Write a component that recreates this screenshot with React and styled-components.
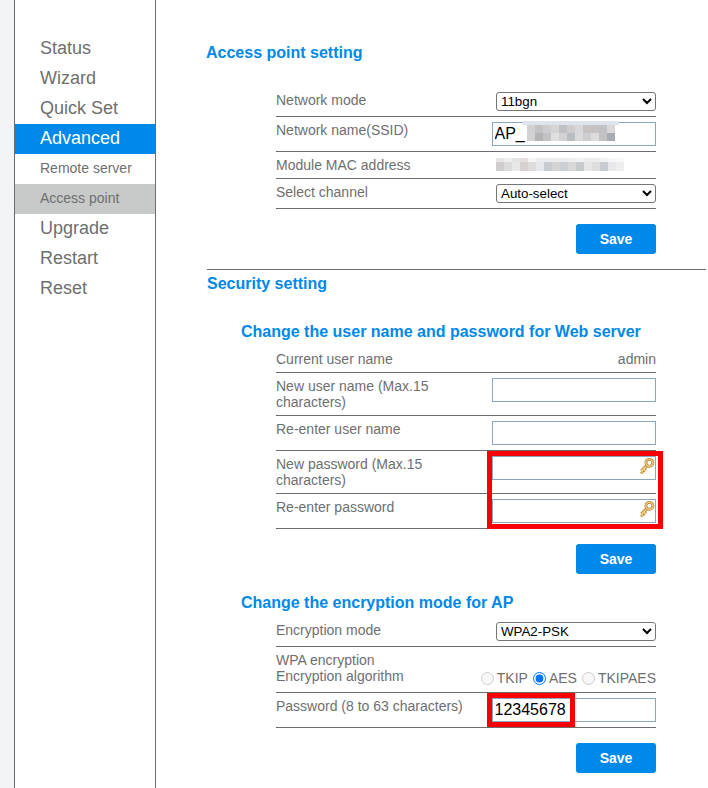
import React from 'react';
import styled, { createGlobalStyle } from 'styled-components';

const BLUE = '#0089e9';
const TEXT = '#6e6f71';
const LINE = '#6d6d6d';

const GlobalStyle = createGlobalStyle`
html, body { margin: 0; padding: 0; background: #fff; }
body { font-family: "Liberation Sans", Arial, sans-serif; font-size: 14px; color: ${TEXT}; }
`;

const NAV = [
  { label: 'Status' },
  { label: 'Wizard' },
  { label: 'Quick Set' },
  { label: 'Advanced', state: 'active' },
  { label: 'Remote server', sub: true },
  { label: 'Access point', sub: true, state: 'current' },
  { label: 'Upgrade' },
  { label: 'Restart' },
  { label: 'Reset' },
];

// pixelated blur over the redacted values
const SSID_ROWS = [
  {
    h: 4,
    x: 0,
    cells: ['#dfe4ec', '#dfe4ec', '#dfe4ec', '#dfe4ec', '#dfe4ec', '#dfe4ec', '#dfe4ec', '#dfe4ec', '#dfe4ec', '#dfe4ec', '#dfe4ec', '#dfe4ec'],
  },
  {
    h: 8,
    x: 4,
    cells: ['#d0d0d2', '#c2c2c4', '#cdcdcf', '#d6d4d5', '#bfc1c4', '#cdcdcf', '#d8d8da', '#c8c3c3', '#c8c3c3', '#bfc1c4', '#d8d8da'],
  },
  {
    h: 8,
    x: 4,
    cells: ['#d2d2d4', '#b2b3b5', '#c2c2c5', '#dfdfe1', '#d2d2d4', '#b9bcc0', '#dadadc', '#cecED0', '#dedcda', '#c2c2c4', '#a8acb2'],
  },
];
const MAC_ROWS = [
  {
    h: 4,
    x: 0,
    cells: ['#e6e6e6', '#eeeeee', '#e4e4e4', '#e4dede', '#f6f4f4', '#eaeef0', '#ecedee', '#ececec', '#ecedee', '#eeeeee', '#f2f2f2', '#eeecea', '#ecedee', '#f2f2f2', '#f6f6f6', '#f8f8f8'],
  },
  {
    h: 9,
    x: 0,
    cells: ['#cfcdcd', '#dcdcdc', '#e8e8e8', '#d6d2d2', '#dfdbdb', '#e4e8ec', '#c8ccd0', '#d4d4d4', '#ccd0d4', '#d8d8d8', '#c6caca', '#e4e6e8', '#e0dedc', '#c8ccd0', '#e8e8ea', '#eeeeef'],
  },
];

const Mosaic = ({ rows, size = 8 }) => {
  var width = Math.max(...rows.map(r => r.x + r.cells.length * size));
  var height = rows.reduce((sum, r) => sum + r.h, 0);
  var top = 0;
  return (
    <svg width={width} height={height} shapeRendering="crispEdges">
      {rows.map((row, i) => {
        var y = top;
        top += row.h;
        return row.cells.map((fill, x) => (
          <rect key={`${i}-${x}`} x={row.x + x * size} y={y} width={size} height={row.h} fill={fill} />
        ));
      })}
    </svg>
  );
};

const KEY_SHAFT = 'M8 7.5 L2.5 13 M4.6 11 L6.6 13 M2.3 13.2 L4.2 15.1';

const KeyIcon = () => (
  <svg width="16" height="18" viewBox="0 0 16 18">
    <path d={KEY_SHAFT} stroke="#a87c34" strokeWidth="3.4" fill="none" />
    <path d={KEY_SHAFT} stroke="#f2cd7c" strokeWidth="1.8" fill="none" />
    <circle cx="10.4" cy="4.8" r="3.5" fill="#fff" stroke="#a87c34" strokeWidth="2.8" />
    <circle cx="10.4" cy="4.8" r="3.5" fill="none" stroke="#f2cd7c" strokeWidth="1.6" />
  </svg>
);

const Page = styled.div`
display: flex;
height: 788px;
overflow: hidden;
`;

const Gutter = styled.div`
width: 14px;
flex: none;
background: #f3f4f6;
border-right: 1px solid ${LINE};
`;

const Sidebar = styled.nav`
width: 140px;
flex: none;
padding-top: 34px;
border-right: 1px solid ${LINE};
`;

const NavItem = styled.div`
height: 30px;
line-height: 28px;
padding-left: 25px;
font-size: ${p => (p.$sub ? '14px' : '18px')};
color: ${p => (p.$state === 'active' ? '#fff' : TEXT)};
background: ${p => (p.$state === 'active' ? BLUE : p.$state === 'current' ? '#c8c9c9' : 'transparent')};
`;

const Main = styled.main`
width: 550px;
flex: none;
padding: 43px 0 0 51px;
box-sizing: border-box;
`;

const SectionTitle = styled.h2`
margin: 0 0 ${p => p.$after}px ${p => p.$indent || 0}px;
font-size: 16px;
line-height: 20px;
font-weight: bold;
color: ${BLUE};
`;

const SubTitle = styled.h3`
margin: ${p => p.$before}px 0 4px 34px;
font-size: 16px;
line-height: 20px;
font-weight: bold;
color: ${BLUE};
`;

const Table = styled.div`
width: 380px;
margin-left: 69px;
`;

const Row = styled.div`
display: flex;
justify-content: space-between;
align-items: flex-start;
box-sizing: border-box;
height: ${p => p.$h}px;
padding-top: 5px;
border-bottom: 1px solid ${LINE};
`;

const Label = styled.div`
width: 190px;
line-height: 16px;
`;

const Value = styled.div`
line-height: 16px;
`;

const Select = styled.select`
display: block;
width: 160px;
height: 19px;
padding: 0;
box-sizing: border-box;
font-family: "Liberation Sans", Arial, sans-serif;
font-size: 13.33px;
color: #000;
background: #fff;
border: 1px solid #767676;
border-radius: 3px;
`;

const FieldWrap = styled.div`
position: relative;
width: 164px;
`;

const TextInput = styled.input`
display: block;
width: 100%;
height: 24px;
padding: 0 2px 0 1.5px;
box-sizing: border-box;
font-family: "Liberation Sans", Arial, sans-serif;
font-size: 16px;
color: #000;
background: #fff;
border: 1px solid #8aa6c1;
outline: none;
`;

const KeySlot = styled.span`
position: absolute;
right: 1px;
top: 2px;
display: block;
line-height: 0;
`;

const MosaicSlot = styled.span`
position: absolute;
left: 31px;
top: -1px;
line-height: 0;
`;

const MacValue = styled.div`
line-height: 0;
padding-top: 1px;
margin-right: 32px;
`;

const Radios = styled.div`
display: flex;
align-items: center;
align-self: flex-end;
height: 16px;
padding-bottom: 6px;
`;

const RadioLabel = styled.label`
display: flex;
align-items: center;
margin-left: 5px;
`;

const Radio = styled.input`
width: 13px;
height: 13px;
margin: 0 3px 0 0;
`;

const Actions = styled.div`
display: flex;
justify-content: flex-end;
width: 380px;
margin: 15px 0 0 69px;
`;

const SaveButton = styled.button`
width: 80px;
height: 30px;
padding: 0;
border: 0;
border-radius: 3px;
background: ${BLUE};
color: #fff;
font-family: "Liberation Sans", Arial, sans-serif;
font-size: 14px;
font-weight: bold;
`;

const Divider = styled.hr`
width: 499px;
height: 1px;
margin: 15px 0 4px;
border: 0;
background: ${LINE};
`;

const Marked = styled.div`
position: relative;
`;

const RedBox = styled.div`
position: absolute;
top: 0;
right: ${p => p.$right}px;
width: ${p => p.$w}px;
height: ${p => p.$h}px;
box-sizing: border-box;
border: 5px solid #f60000;
pointer-events: none;
`;

const Save = () => (
  <Actions>
    <SaveButton type="button">Save</SaveButton>
  </Actions>
);

const App = () => (
  <Page>
    <GlobalStyle />
    <Gutter />
    <Sidebar>
      {NAV.map(item => (
        <NavItem key={item.label} $sub={item.sub} $state={item.state}>{item.label}</NavItem>
      ))}
    </Sidebar>
    <Main>
      <SectionTitle $after={24} $indent={-1}>Access point setting</SectionTitle>
      <Table>
        <Row $h={30}>
          <Label>Network mode</Label>
          <Select defaultValue="11bgn"><option>11bgn</option></Select>
        </Row>
        <Row $h={35}>
          <Label>Network name(SSID)</Label>
          <FieldWrap>
            <TextInput defaultValue="AP_" />
            <MosaicSlot><Mosaic rows={SSID_ROWS} /></MosaicSlot>
          </FieldWrap>
        </Row>
        <Row $h={27}>
          <Label>Module MAC address</Label>
          <MacValue><Mosaic rows={MAC_ROWS} /></MacValue>
        </Row>
        <Row $h={30}>
          <Label>Select channel</Label>
          <Select defaultValue="Auto-select"><option>Auto-select</option></Select>
        </Row>
      </Table>
      <Save />
      <Divider />
      <SectionTitle $after={28}>Security setting</SectionTitle>
      <SubTitle $before={0}>Change the user name and password for Web server</SubTitle>
      <Table>
        <Row $h={27}>
          <Label>Current user name</Label>
          <Value>admin</Value>
        </Row>
        <Row $h={43}>
          <Label>New user name (Max.15 characters)</Label>
          <FieldWrap><TextInput /></FieldWrap>
        </Row>
        <Row $h={35}>
          <Label>Re-enter user name</Label>
          <FieldWrap><TextInput /></FieldWrap>
        </Row>
        <Marked>
          <Row $h={43}>
            <Label>New password (Max.15 characters)</Label>
            <FieldWrap><TextInput /><KeySlot><KeyIcon /></KeySlot></FieldWrap>
          </Row>
          <Row $h={35}>
            <Label>Re-enter password</Label>
            <FieldWrap><TextInput /><KeySlot><KeyIcon /></KeySlot></FieldWrap>
          </Row>
          <RedBox $right={-7} $w={176} $h={78} />
        </Marked>
      </Table>
      <Save />
      <SubTitle $before={19}>Change the encryption mode for AP</SubTitle>
      <Table>
        <Row $h={30}>
          <Label>Encryption mode</Label>
          <Select defaultValue="WPA2-PSK"><option>WPA2-PSK</option></Select>
        </Row>
        <Row $h={46}>
          <Label>WPA encryption<br />Encryption algorithm</Label>
          <Radios>
            <RadioLabel><Radio type="radio" name="algo" disabled />TKIP</RadioLabel>
            <RadioLabel><Radio type="radio" name="algo" defaultChecked />AES</RadioLabel>
            <RadioLabel><Radio type="radio" name="algo" disabled />TKIPAES</RadioLabel>
          </Radios>
        </Row>
        <Marked>
          <Row $h={35}>
            <Label>Password (8 to 63 characters)</Label>
            <FieldWrap><TextInput defaultValue="12345678" /></FieldWrap>
          </Row>
          <RedBox $right={81} $w={88} $h={34} />
        </Marked>
      </Table>
      <Save />
    </Main>
  </Page>
);

export default App;
